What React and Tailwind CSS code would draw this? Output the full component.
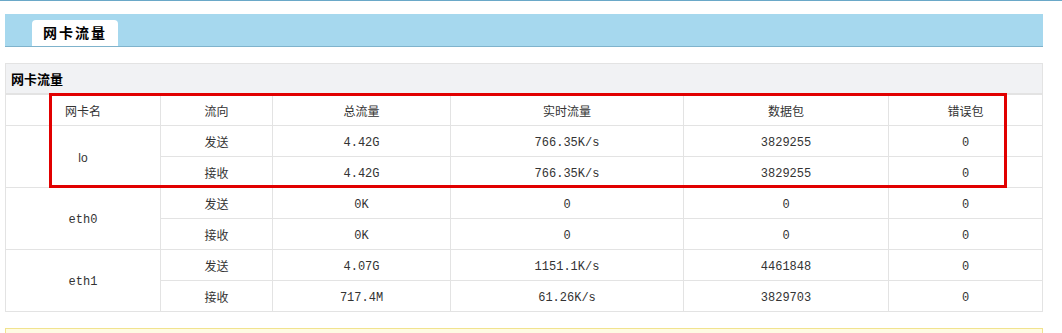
import React from 'react';

const rows = [
  { name: 'lo', items: [
    ['发送', '4.42G', '766.35K/s', '3829255', '0'],
    ['接收', '4.42G', '766.35K/s', '3829255', '0'],
  ] },
  { name: 'eth0', items: [
    ['发送', '0K', '0', '0', '0'],
    ['接收', '0K', '0', '0', '0'],
  ] },
  { name: 'eth1', items: [
    ['发送', '4.07G', '1151.1K/s', '4461848', '0'],
    ['接收', '717.4M', '61.26K/s', '3829703', '0'],
  ] },
];

const cjk = "font-['Liberation_Sans','Noto_Sans_CJK_SC',sans-serif]";
const mono = "font-['Liberation_Mono','Noto_Sans_CJK_SC',monospace]";
const cell = 'border border-[#e3e3e3] h-[31px] p-0 pt-[3px] text-center text-[12px] text-[#333]';
const spanCell = 'border border-[#e3e3e3] h-[31px] p-0 pt-[2px] text-center text-[12px] text-[#333]';

const App = () => {
  return (
    <div className={`relative w-[1062px] h-[333px] overflow-hidden bg-white ${cjk}`}>
      <div className="h-px bg-[#6aa8c8]" />

      {/* Tab bar */}
      <div className="mx-[5px] mt-[13px] w-[1038px] h-[33px] bg-[#a6d8ee] border-b border-[#7fb3cc] flex items-end pl-[27px]">
        <div className="w-[86px] h-[26px] bg-white rounded-t-[4px] flex items-center justify-center text-[14px] font-bold text-black tracking-[2px]">
          网卡流量
        </div>
      </div>

      {/* Panel */}
      <div className="mx-[5px] mt-[16px] w-[1038px]">
        <div className="h-[31px] bg-[#f1f2f4] border border-[#e3e3e3] flex items-center pl-[5px] pt-[2px] text-[13px] font-bold text-black">
          网卡流量
        </div>
        <table className="w-[1038px] border-collapse table-fixed">
          <colgroup>
            <col className="w-[155px]" />
            <col className="w-[112px]" />
            <col className="w-[178px]" />
            <col className="w-[233px]" />
            <col className="w-[205px]" />
            <col className="w-[154px]" />
          </colgroup>
          <tbody>
            <tr>
              <td className={cell}>网卡名</td>
              <td className={cell}>流向</td>
              <td className={cell}>总流量</td>
              <td className={cell}>实时流量</td>
              <td className={cell}>数据包</td>
              <td className={cell}>错误包</td>
            </tr>
            {rows.map((r) =>
              r.items.map((it, i) => (
                <tr key={r.name + i}>
                  {i === 0 && (
                    <td rowSpan={2} className={`${spanCell} ${r.name === 'lo' ? cjk : mono}`}>{r.name}</td>
                  )}
                  <td className={cell}>{it[0]}</td>
                  <td className={`${cell} ${mono}`}>{it[1]}</td>
                  <td className={`${cell} ${mono}`}>{it[2]}</td>
                  <td className={`${cell} ${mono}`}>{it[3]}</td>
                  <td className={`${cell} ${mono}`}>{it[4]}</td>
                </tr>
              ))
            )}
          </tbody>
        </table>
      </div>

      {/* Notice bar */}
      <div className="mx-[5px] mt-[16px] w-[1038px] h-[20px] bg-[#fffbe3] border border-[#f1e38e]" />

      {/* Red annotation box */}
      <div className="absolute left-[49px] top-[93px] w-[958px] h-[95px] border-[3px] border-[#e10000] pointer-events-none" />
    </div>
  );
};

export default App;
